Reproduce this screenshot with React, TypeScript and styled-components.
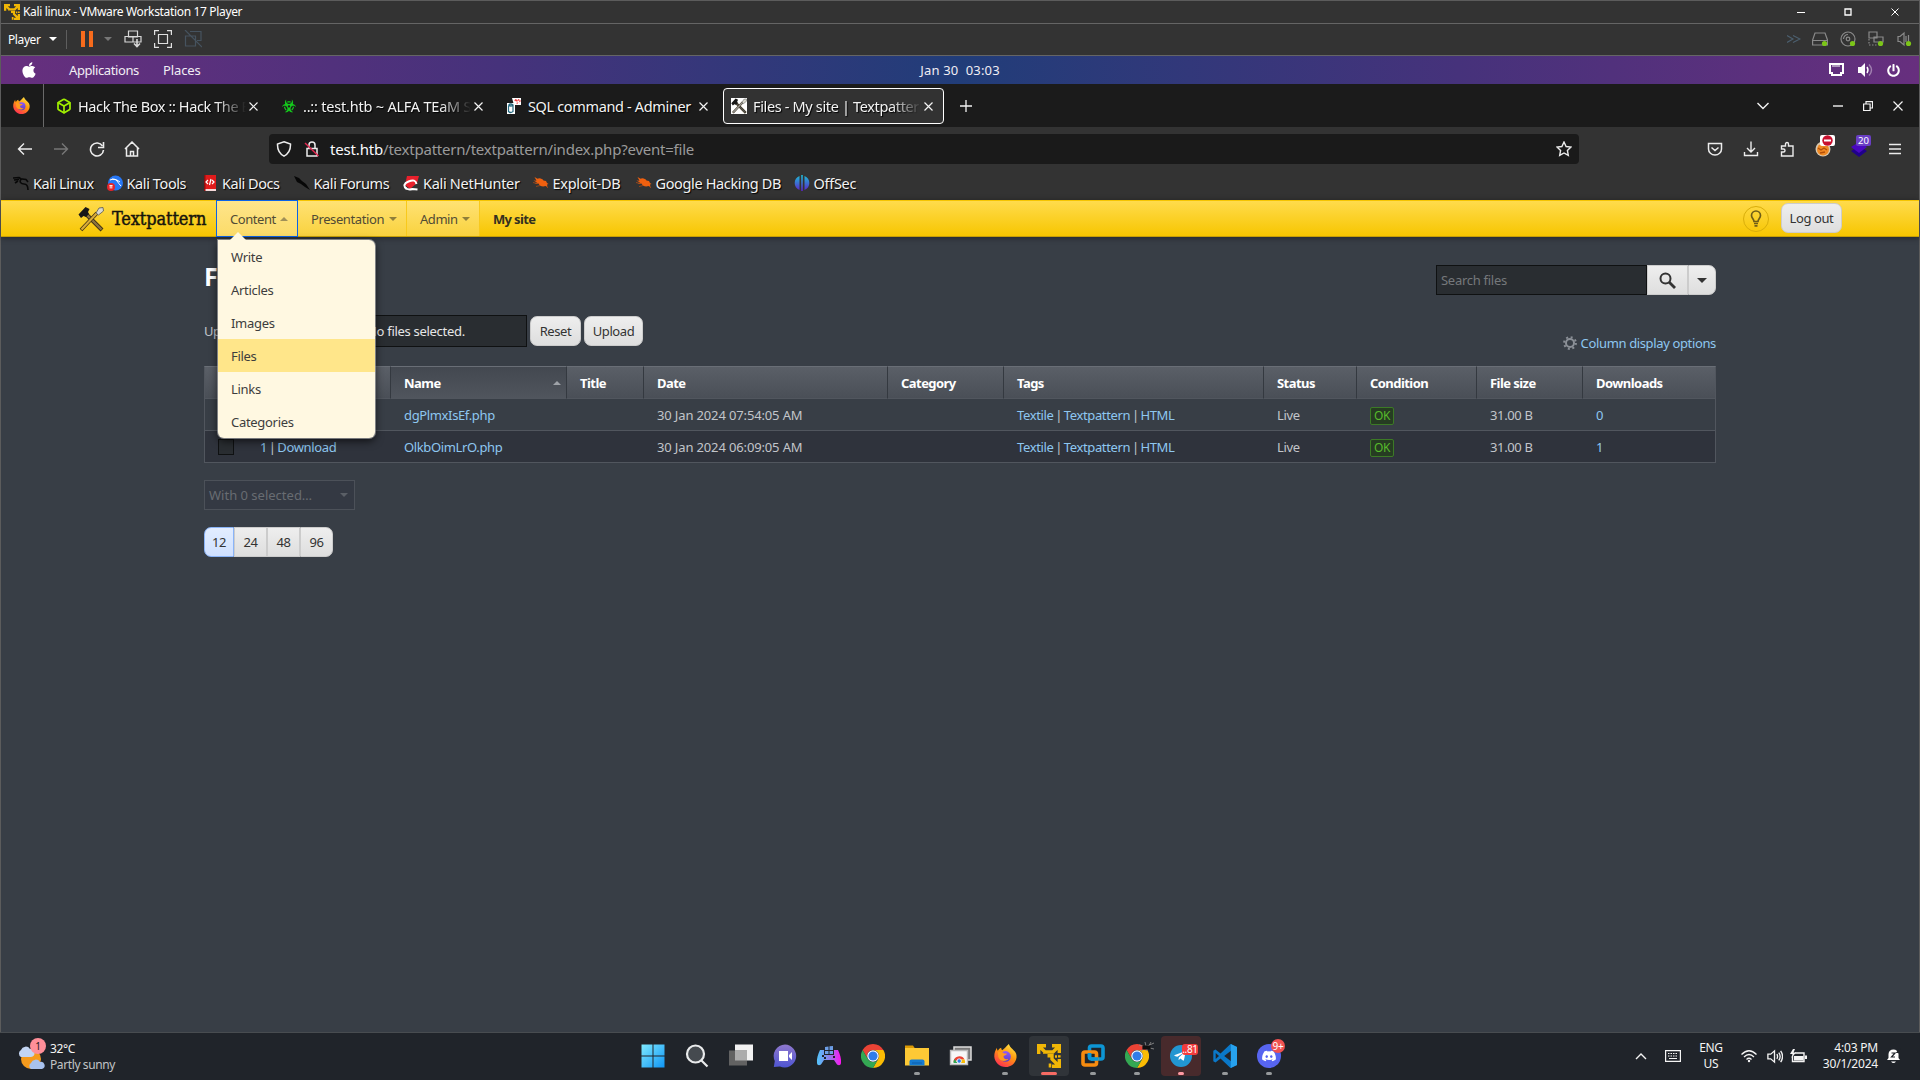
import React from 'react';
import styled, { createGlobalStyle } from 'styled-components';
import { FaApple, FaBiohazard, FaDiscord, FaTelegramPlane, FaPowerOff } from 'react-icons/fa';
import { Box } from 'lucide-react';

const Global = createGlobalStyle`
  * { box-sizing: border-box; }
  html, body { margin: 0; padding: 0; background: #16181b; }
  body { font-family: "Noto Sans", "Open Sans", sans-serif; font-size: 13px; overflow: hidden; }
  svg { display: block; flex: none; }
  button { font: inherit; padding: 0; margin: 0; }
`;

const Screen = styled.div`
  width: 1920px; height: 1080px; display: flex; flex-direction: column; overflow: hidden;
`;
const VmWindow = styled.div`
  height: 1032px; display: flex; flex-direction: column;
  border: 1px solid #5c5c5c; border-bottom: 0; background: #333;
`;
const Text = styled.span<{ $ls?: number; $size?: number; $color?: string; $w?: number; $bold?: boolean; $ml?: number }>`
  display: block; flex: none; white-space: pre;
  letter-spacing: ${p => p.$ls ?? -0.4}px;
  margin-left: ${p => p.$ml ?? 0}px;
  ${p => p.$size && `font-size: ${p.$size}px;`}
  ${p => p.$color && `color: ${p.$color};`}
  ${p => p.$w && `width: ${p.$w}px;`}
  ${p => p.$bold && 'font-weight: 700;'}
`;
const Slot = styled.span<{ $w: number; $ml?: number; $mr?: number }>`
  flex: none; width: ${p => p.$w}px; display: flex; align-items: center; justify-content: center; position: relative;
  margin: 0 ${p => p.$mr ?? 0}px 0 ${p => p.$ml ?? 0}px;
`;
const Grow = styled.div`flex: 1;`;

/* ---------- VMware chrome ---------- */
const TitleBar = styled.div`
  flex: none; height: 23px; display: flex; align-items: center; padding: 0 0 1px 3px; color: #fff;
  border-bottom: 1px solid #656565; gap: 3px;
`;
const WinButtons = styled.div`display: flex; align-items: center;`;
const PlayerBar = styled.div`
  flex: none; height: 32px; display: flex; align-items: center; padding: 0 1px 1px 7px; color: #fff;
  border-bottom: 1px solid #656565; background: #333;
`;
const Caret = styled.i<{ $up?: boolean; $color: string; $s?: number }>`
  flex: none; width: 0; height: 0; border: ${p => p.$s ?? 4}px solid transparent;
  ${p => p.$up
    ? `border-top: 0; border-bottom-color: ${p.$color};`
    : `border-bottom: 0; border-top-color: ${p.$color};`}
`;
const Divider = styled.i`width: 1px; height: 19px; background: #5e5e5e; flex: none;`;
const Gray = styled.span`color: #8a8a8a; display: block;`;

/* ---------- Guest top panel ---------- */
const Panel = styled.div`
  flex: none; height: 28px; display: grid; grid-template-columns: 1fr auto 1fr; align-items: center;
  color: #f1edf4; background: linear-gradient(90deg, #672f7e 0%, #46327b 26%, #213d79 50%, #46327b 76%, #672f7e 100%);
`;
const PanelSide = styled.div<{ $end?: boolean }>`
  display: flex; align-items: center; justify-content: ${p => (p.$end ? 'flex-end' : 'flex-start')};
  padding: ${p => (p.$end ? '0 12px 0 0' : '0 0 0 14px')};
`;

/* ---------- Browser ---------- */
const TabStrip = styled.div`
  flex: none; height: 43px; display: flex; align-items: center; background: #1b1b1b; color: #f3f3f3; padding-right: 6px;
`;
const Pinned = styled.div`
  width: 43px; height: 43px; border-right: 1px solid #6a6a6a; display: flex; align-items: center; padding-left: 12px; margin-right: 4px;
`;
const Tab = styled.div<{ $active?: boolean }>`
  flex: none; width: 221px; height: 36px; margin-right: 4px; display: flex; align-items: center; padding: 1px 8px 0 7px;
  border: 1px solid ${p => (p.$active ? '#fff' : 'transparent')}; border-radius: 4px;
  background: ${p => (p.$active ? '#323232' : 'transparent')};
`;
const TabLabel = styled.span<{ $fade: boolean; $ls: number }>`
  flex: 1; min-width: 0; margin-left: 6px; overflow: hidden; white-space: pre; font-size: 14.5px;
  letter-spacing: ${p => p.$ls}px; line-height: 24px; text-shadow: 1px 1px 1px #000;
  ${p => p.$fade && 'mask-image: linear-gradient(90deg, #000 82%, transparent 100%);'}
`;
const NavBar = styled.div`
  flex: none; height: 42px; display: flex; align-items: center; background: #333; padding: 1px 6px 0; color: #ececec;
`;
const UrlBox = styled.div`
  width: 1310px; height: 30px; margin-left: 120px; border-radius: 4px; background: #1a1a1a; display: flex; align-items: center;
  font-size: 15px;
`;
const Bookmarks = styled.div`
  flex: none; height: 31px; display: flex; align-items: center; background: #333; padding: 0 0 3px 12px; color: #f2f2f2;
`;
const Bookmark = styled.div<{ $w: number; $ls: number }>`
  flex: none; width: ${p => p.$w}px; display: flex; align-items: center; gap: 4px; white-space: pre; font-size: 14.5px;
  letter-spacing: ${p => p.$ls}px; text-shadow: 1px 1px 1px #000;
`;
const ExtBadge = styled.span<{ $bg: string; $color: string }>`
  position: absolute; left: 15px; top: -6px; width: 15px; height: 11px; border-radius: 2px; font-size: 9.5px; line-height: 11px;
  text-align: center; background: ${p => p.$bg}; color: ${p => p.$color}; display: flex; align-items: center; justify-content: center;
`;

/* ---------- Textpattern ---------- */
const SiteHeader = styled.header`
  flex: none; height: 37px; display: flex; align-items: center; padding: 0 77px;
  border-top: 1px solid #f5c400; border-bottom: 1px solid #c79f06;
  background: linear-gradient(#ffdb4c, #f7c600); box-shadow: 0 1px 6px rgba(0,0,0,.4); position: relative;
`;
const Brand = styled.div`
  flex: none; width: 138px; display: flex; align-items: center; gap: 8px; color: #17150c; white-space: nowrap;
  font: 400 18px "DejaVu Serif Condensed", "DejaVu Serif", "Liberation Serif", serif; letter-spacing: -.1px;
  -webkit-text-stroke: .45px #17150c;
`;
const MenuTab = styled.div<{ $w: number; $open?: boolean }>`
  flex: none; position: relative; width: ${p => p.$w}px; height: ${p => (p.$open ? 37 : 35)}px; display: flex; align-items: center;
  justify-content: space-between; padding: 0 9px 0 13px; color: #514b35;
  background: ${p => (p.$open ? 'linear-gradient(#fee58b, #fbdb68)' : 'linear-gradient(#ffe274, #f9d23e)')};
  border: ${p => (p.$open ? '1px solid #0a63e8' : '0')}; border-right: ${p => (p.$open ? '1px solid #0a63e8' : '1px solid #f8c91c')};
`;
const DropMenu = styled.nav`
  position: absolute; z-index: 5; left: 1px; top: 39px; width: 157px; height: 198px; background: #fff8e1; color: #3d3d3d;
  border-radius: 0 6px 6px 6px; box-shadow: 0 0 0 1px rgba(200,200,200,.55), 0 3px 8px rgba(0,0,0,.7); display: flex; flex-direction: column;
  &::before { content: ''; position: absolute; left: 12px; top: -8px; border: 8px solid transparent; border-top: 0; border-bottom-color: #fff8e1; }
`;
const MenuItem = styled.a<{ $on?: boolean }>`
  flex: none; height: 33px; display: flex; align-items: center; padding: 0 0 0 13px; background: ${p => (p.$on ? '#ffe68a' : 'transparent')};
`;
const Bulb = styled.span`
  width: 26px; height: 26px; border: 1px solid #d9ae0a; border-radius: 50%; display: flex; align-items: center; justify-content: center; margin-right: 12px;
`;
const Button = styled.button<{ $w: number; $radius?: string; $blue?: boolean; $up?: boolean }>`
  flex: none; width: ${p => p.$w}px; height: 30px; border-radius: ${p => p.$radius ?? '7px'}; color: #333; letter-spacing: -0.4px;
  display: flex; align-items: center; justify-content: center; margin-bottom: ${p => (p.$up ? 2 : 0)}px;
  border: 1px solid ${p => (p.$blue ? '#8ab4f8' : '#ccc')};
  background: ${p => (p.$blue ? 'linear-gradient(#e2edff, #cfe0ff)' : 'linear-gradient(#eee, #dedede)')};
`;
const Page = styled.main`
  flex: 1; background: #383e46; padding: 28px 203px 0; color: #c2c5ca; display: flex; flex-direction: column; align-items: stretch;
`;
const Row = styled.div<{ $h: number; $mt?: number; $align?: string; $gap?: number }>`
  display: flex; align-items: ${p => p.$align ?? 'center'}; height: ${p => p.$h}px; margin-top: ${p => p.$mt ?? 0}px; flex: none;
  gap: ${p => p.$gap ?? 0}px;
`;
const Heading = styled.h1`margin: 0; padding-bottom: 8px; font-size: 25px; line-height: 24px; color: #fff; letter-spacing: -.5px;`;
const FileInput = styled.div`
  width: 271px; height: 32px; background: #292d31; border: 1px solid #0f1112; color: #e6e6e6; display: flex; align-items: center;
  padding-left: 110px; letter-spacing: -.3px; white-space: pre;
`;
const SearchInput = styled.div`
  width: 211px; height: 30px; background: #292d31; border: 1px solid #0f1112; color: #75787b; display: flex; align-items: center;
  padding-left: 4px; letter-spacing: -.28px;
`;
const Link = styled.a`color: #8ec7f0;`;
const Table = styled.table`
  flex: none; width: 1512px; margin-top: 14px; table-layout: fixed; border-collapse: separate; border-spacing: 0; letter-spacing: -.36px; white-space: pre;
  td, th { padding: 1px 0 0 13px; text-align: left; height: 32px; border-bottom: 1px solid #51565e; }
  td:first-child, th:first-child { border-left: 1px solid #51565e; }
  td:last-child { border-right: 1px solid #51565e; }
`;
const Th = styled.th<{ $sorted?: boolean }>`
  color: #fff; letter-spacing: -.55px; border-top: 1px solid #696e76; border-right: 1px solid #343940;
  &&& { height: 33px; }
  background: ${p => (p.$sorted ? 'linear-gradient(#434850, #50555d)' : 'linear-gradient(#5a5f67, #4a4f57)')};
  &:last-child { border-right-color: #51565e; }
`;
const ThInner = styled.div`display: flex; align-items: center; justify-content: space-between; padding-right: 5px;`;
const Tr = styled.tr<{ $dark?: boolean }>`background: ${p => (p.$dark ? '#2f333c' : 'transparent')};`;
const DateText = styled.span`letter-spacing: -.14px;`;
const Sep = styled.span`word-spacing: -1.3px;`;
const IdCell = styled.div`display: flex; align-items: center;`;
const Check = styled.i`width: 16px; height: 16px; background: #292d31; border: 1px solid #0f1112; margin-right: 26px;`;
const Ok = styled.span`
  display: inline-block; vertical-align: middle; width: 24px; height: 18px; line-height: 16px; border: 1px solid #3c7a26; border-radius: 2px; background: #263c22;
  color: #57ba2c; font-size: 12px; text-align: center;
`;
const Select = styled.div`
  width: 151px; height: 30px; border: 1px solid #4c5159; background: #343943; color: #686c72; display: flex; align-items: center;
  justify-content: space-between; padding: 0 6px 0 4px; letter-spacing: 0;
`;

/* ---------- Taskbar ---------- */
const Taskbar = styled.footer`
  flex: none; height: 48px; background: #20242a; border-top: 1px solid #484c50; display: grid; grid-template-columns: 631px 660px 1fr; color: #f4f4f4;
  font-size: 12px; letter-spacing: -.3px;
`;
const Zone = styled.div<{ $pb?: number }>`display: flex; align-items: center; position: relative; padding-bottom: ${p => p.$pb ?? 0}px;`;
const AppIcon = styled.div<{ $bg?: string }>`
  width: 40px; height: 40px; margin: 0 2px; border-radius: 4px; display: flex; align-items: center; justify-content: center; position: relative;
  background: ${p => p.$bg ?? 'transparent'};
`;
const Dot = styled.i<{ $w: number; $c: string }>`
  position: absolute; bottom: 1px; left: 50%; width: ${p => p.$w}px; height: 3px; margin-left: ${p => -p.$w / 2}px; border-radius: 2px; background: ${p => p.$c};
`;
const Overlay = styled.span`position: absolute; left: 22px; top: 6px;`;
const Badge = styled.b<{ $round?: boolean; $bg: string; $x: number; $y: number; $w: number; $h: number; $c?: string }>`
  position: absolute; left: ${p => p.$x}px; top: ${p => p.$y}px; width: ${p => p.$w}px; height: ${p => p.$h}px; line-height: ${p => p.$h}px;
  border-radius: ${p => (p.$round ? '50%' : '3px')}; background: ${p => p.$bg}; color: ${p => p.$c ?? '#fff'}; font-weight: 400; font-size: 10px; text-align: center;
`;
const Stack = styled.div<{ $align?: string; $w?: number; $ls?: number }>`
  flex: none; display: flex; flex-direction: column; line-height: 16px; text-align: ${p => p.$align ?? 'left'}; ${p => p.$w && `width: ${p.$w}px;`}
  letter-spacing: ${p => p.$ls ?? -.3}px;
`;
const Muted = styled.span`color: #c2c4c6;`;

/* ---------- Icons ---------- */
const S = ({ w = 16, h, vb, children, ...r }: any) => (
  <svg width={w} height={h ?? w} viewBox={vb ?? `0 0 ${w} ${h ?? w}`} fill="none" stroke="currentColor" strokeWidth={1.4} {...r}>{children}</svg>
);
const VmLogo = ({ s }: { s: number }) => (
  <svg width={s} height={s} viewBox="0 0 24 24" fill="none" stroke="#f0b606" strokeWidth="3.400">
    <path d="M1.700 10V1.700H9M15 1.700h7.300V9M2 2l6.500 6.500M22 2l-6 6H6" />
    <path d="M22.300 15v7.300H15M21.500 21.500L15 15v-3.200h-4.500" />
    <path d="M22.300 11.200v2.300M13 19.500v4M18 12.500h2" strokeWidth="2.600" />
  </svg>
);
const Firefox = ({ s }: { s: number }) => (
  <svg width={s} height={s} viewBox="0 0 24 24">
    <defs>
      <linearGradient id="fx" x1=".8" y1="0" x2=".25" y2="1"><stop offset="0" stopColor="#ffe84a" /><stop offset=".45" stopColor="#ff980e" /><stop offset="1" stopColor="#ff2a55" /></linearGradient>
      <linearGradient id="fp" x1="0" y1="0" x2="0" y2="1"><stop offset="0" stopColor="#9059ff" /><stop offset="1" stopColor="#5b3ec2" /></linearGradient>
    </defs>
    <path fill="url(#fx)" d="M3 4c0 1.500.5 2.500 1 3 1-1.500 2-2.500 3.500-3 0 1 .5 2 1 2.500C11 5 12 3 15.500 0c.5 2 2 3.500 4 5.500C22 8 24 10 23.500 14 22.800 19.800 18 24 12 24S.5 19 .3 13C.2 9.500 1.500 6.500 3 4z" />
    <circle cx="12" cy="13" r="5.600" fill="url(#fp)" />
    <path fill="#ff9a1f" d="M4 8.500c3-1 5 0 6.500 1.500h3c-.3 1.500-2 2-3.500 2.500-.5 2.500 2 4 5 3-1.500 3-9 3.500-10.500-2z" />
  </svg>
);
const Chrome = ({ s }: { s: number }) => (
  <svg width={s} height={s} viewBox="0 0 24 24">
    <path fill="#ea4335" d="M12 0a12 12 0 0 1 10.400 6H12a6 6 0 0 0-5.200 9L1.600 6A12 12 0 0 1 12 0z" />
    <path fill="#fbbc04" d="M22.400 6A12 12 0 0 1 12 24l5.200-9A6 6 0 0 0 12 6z" />
    <path fill="#34a853" d="M1.600 6l5.200 9A6 6 0 0 0 17.200 15L12 24A12 12 0 0 1 1.600 6z" />
    <circle cx="12" cy="12" r="5.800" fill="#fff" /><circle cx="12" cy="12" r="4.600" fill="#2f7de9" />
  </svg>
);
const Hammer = ({ s, mono }: { s: number; mono?: boolean }) => (
  <svg width={s} height={s} viewBox="0 0 26 26">
    {mono && <path fill="#fff" d="M0 0h26v26H0z" />}
    <path d="M8 8l16 16" stroke="#3c2f12" strokeWidth="4" /><path d="M8 8l15.500 15.500" stroke={mono ? '#555' : '#8d7440'} strokeWidth="2.400" />
    <path d="M3 24L19 7" stroke="#3c2f12" strokeWidth="3.600" /><path d="M3.500 23.500L19 7" stroke={mono ? '#999' : '#d8ac3a'} strokeWidth="2.200" />
    <path d="M18 7l3-5 4-.5.500 3.500-5 4z" fill="#d9d9cf" stroke="#555" strokeWidth=".8" />
    <path d="M.5 8.500l7-7.500 4 2-1.500 3 1 2-3 3-2.500-1-2.500 2z" fill="#181818" />
  </svg>
);
const X = ({ s = 9, w = 1.2 }: { s?: number; w?: number }) => <S w={s} strokeWidth={w}><path d={`M.5.5l${s - 1} ${s - 1}M${s - .5}.5l-${s - 1} ${s - 1}`} /></S>;
const Bug = () => <S stroke="none"><path fill="#f0600f" d="M1.500 2l3 1.800c2-1.300 5 0 6 1.700l2.500.500 1 2 1.500 1-1.500.5.500 2.500-2-1c-3 1-6 0-7-2.500L1.500 9 4 7.500.5 5.500l3 .2z" /><path d="M0 7.500l5 1M3 11.500l4-1M13 11l2 2" stroke="#a84a16" strokeWidth=".8" /></S>;
const Dragon = () => (
  <S stroke="#080808" strokeWidth={1.600}><path d="M0 3l6-.5 3 2M1 5l5-.5M8 4c-2 3 0 5 3 5s4 2 4 6M9 4l4 .5 2 2.500M2 8l3-2" /></S>
);
const Speaker = () => (
  <S w={17} vb="0 0 18 18"><path d="M2 6.500h3l4-3.500v12l-4-3.500H2z" /><path d="M11.500 6.500q1.500 2.500 0 5M13.500 5q3 4 0 8M15.500 3q4 6 0 12" /></S>
);

const bookmarks: [string, number, number, React.ReactNode][] = [
  ['Kali Linux', 93.5, -.47, <Dragon />],
  ['Kali Tools', 95.5, -.4, <S stroke="none"><circle cx="8.500" cy="8" r="7.500" fill="#2777f5" /><path d="M3 5q5-2 7 1t4 5M5 4q5 0 8 3" stroke="#fff" strokeWidth="1" /><circle cx="4" cy="12" r="4" fill="#e5252a" /><path d="M2.500 10.500h3M3.200 10.500v3M4.800 10.500v3" stroke="#fff" strokeWidth=".9" /></S>],
  ['Kali Docs', 91.5, -.45, <S stroke="none"><path fill="#e01b1b" d="M2 0h12v14H2z" /><path fill="#f6d9d9" d="M2 14h12v2H2z" /><path fill="#8d1010" d="M2 0h1.500v16H2z" /><path d="M6 5l-2 2 2 2M10 5l2 2-2 2M9 4L7.500 10" stroke="#fff" strokeWidth="1.200" /></S>],
  ['Kali Forums', 109.5, -.4, <S stroke="none"><path fill="#070707" d="M0 1l5 2 3 3 4 3 4 6-5-3-4-3-4-2z" /></S>],
  ['Kali NetHunter', 129.5, -.3, <S stroke="none"><path fill="#e8202c" d="M4 1h12l-2 7-7 6-5-4z" /><path d="M3.500 14q-5-4.500 2-7.500t8 2.500M2.500 12.500q2 3 7 1.500l5 .5" stroke="#fff" strokeWidth="2" /></S>],
  ['Exploit-DB', 103, -.3, <Bug />],
  ['Google Hacking DB', 158, -.36, <Bug />],
  ['OffSec', 80, -.3, <S stroke="none"><defs><linearGradient id="os" gradientUnits="userSpaceOnUse" x1="0" y1="0" x2="0" y2="16"><stop stopColor="#1cc0d8" /><stop offset="1" stopColor="#5b21c9" /></linearGradient></defs><path fill="url(#os)" d="M5.500 1v14A7.500 7.500 0 0 1 5.500 1zM7.200 0h1.600v16H7.200zM10.500 1a7.500 7.500 0 0 1 0 14z" /></S>],
];
const tabs: [string, number, boolean, React.ReactNode][] = [
  ['Hack The Box :: Hack The Box', -.4, true, <Box size={16} color="#a0ee00" strokeWidth={2.6} />],
  ['..:: test.htb ~ ALFA TEaM Shell', -.21, true, <FaBiohazard size={14} color="#14c91c" />],
  ['SQL command - Adminer', -.35, false, <S stroke="none"><path fill="#fff" d="M1 5h8v11H1zM6 0h9v7H8z" /><path d="M2.500 7.500v6q2 2 4.500 0v-6M2.500 7q2.200-2 4.500 0-2.200 2-4.500 0" stroke="#256a80" strokeWidth="1.200" /><path d="M9 3q1-3 2 0t-1 2.500M12 2.500q1.500-2 2 .5l-1 2" stroke="#e22" strokeWidth="1.200" strokeDasharray="1.500 1" /></S>],
  ['Files - My site | Textpattern CMS', -.35, true, <Hammer s={16} mono />],
];
const columns = [187, 176, 77, 244, 116, 260, 93, 120, 106, 133];
const heads = ['', 'Name', 'Title', 'Date', 'Category', 'Tags', 'Status', 'Condition', 'File size', 'Downloads'];
const files = [
  { id: 2, name: 'dgPlmxIsEf.php', date: '30 Jan 2024 07:54:05 AM', n: 0 },
  { id: 1, name: 'OlkbOimLrO.php', date: '30 Jan 2024 06:09:05 AM', n: 1 },
];
const folder = <S w={24} stroke="none"><path fill="#dc9a05" d="M0 1.500h8l2 3h-10z" /><path fill="#fdc935" d="M0 4h24v17.500H0z" /><path fill="#157bd1" d="M4.500 21.500v-4q0-2 2-2h11q2 0 2 2v4z" /><path fill="#0e5fa8" d="M7 18.500h10v1H7z" /></S>;
const apps: { icon: React.ReactNode; dot?: 'g' | 'r' | 'p'; bg?: string; extra?: React.ReactNode }[] = [
  { icon: <S w={24} stroke="none"><defs><linearGradient id="wn" x1="0" y1="0" x2="1" y2="1"><stop stopColor="#7feaff" /><stop offset="1" stopColor="#0f95f5" /></linearGradient></defs><path fill="url(#wn)" d="M.5.5h11v11h-11zM12.500.5h11v11h-11zM.5 12.500h11v11h-11zM12.500 12.500h11v11h-11z" /></S> },
  { icon: <S w={24} stroke="#e9ebec" strokeWidth={2.2}><circle cx="10.500" cy="10" r="8.500" fill="#454a4f" /><path d="M16.500 16.500l6 6" /></S> },
  { icon: <S w={24} stroke="none"><path fill="#f2f2f2" d="M6 .5h18v16H6z" /><path fill="#626262" d="M0 6.500h18v15H0z" /><path fill="#acacac" d="M6 6.500h12v10H6z" /></S> },
  { icon: <S w={24} stroke="none"><defs><linearGradient id="tm" x1="0" y1="0" x2="0" y2="1"><stop stopColor="#8f78cd" /><stop offset="1" stopColor="#4e55d2" /></linearGradient></defs><path fill="url(#tm)" d="M12 .5a11.500 11.500 0 1 1-5 22L.8 23 1.800 17A11.500 11.500 0 0 1 12 .5z" /><path fill="#fff" d="M6 7h9v10H6zM16 11l3-3v8l-3-3z" /></S> },
  { icon: <S w={26} h={24} stroke="none"><defs><linearGradient id="gp" x1="0" y1="0" x2="1" y2="0"><stop stopColor="#52c6fb" /><stop offset=".5" stopColor="#8c7fea" /><stop offset="1" stopColor="#ff12f0" /></linearGradient></defs><path fill="#6d9ee6" d="M9 3l3.500-.5V6H9zM13.500 2.300L17 2v4h-3.500zM9 7h3.500v3H9zM13.500 7H17v3h-3.500z" /><path fill="url(#gp)" d="M4 6h4v5h10V6h4c2 4 3.500 9 3 13-.3 3-3.500 3-5 0l-2-3H8l-2 3c-1.500 3-4.700 3-5 0C.5 15 2 10 4 6z" /><path fill="#20242a" d="M6 11h2v2h2v2H8v-2H6zM17 12h2v2h-2z" /></S> },
  { icon: <Chrome s={24} /> },
  { icon: folder, dot: 'g' },
  { icon: <S w={24} stroke="none"><path fill="#777" stroke="#ddd" strokeWidth="1.500" d="M5 3h17v13H5z" /><path fill="#f7f7f7" stroke="#bbb" d="M1.500 6.500h17v14h-17z" /><path fill="#ea4335" d="M4.500 18a5.800 5.800 0 0 1 11-2.500H10z" /><path fill="#34a853" d="M4.500 19a6 6 0 0 1 1-4l3 4z" /><path fill="#fbbc04" d="M12 15.500h3.500q1 2 .5 3.500h-4z" /><circle cx="10.200" cy="17" r="2.200" fill="#2f7de9" stroke="#fff" strokeWidth=".8" /></S> },
  { icon: <Firefox s={23} />, dot: 'g' },
  { icon: <VmLogo s={24} />, dot: 'r', bg: '#303439' },
  { icon: <S w={24} strokeWidth={3.6}><rect x="8.500" y="2" width="13.500" height="13" rx="2" stroke="#0d96d5" /><rect x="2" y="8" width="13.500" height="13" rx="2" stroke="#f68b0f" /><path d="M8.500 13.200V9M10 15h7" stroke="#0d96d5" /></S>, dot: 'g' },
  { icon: <Chrome s={24} />, dot: 'g', extra: <Overlay><S w={16} h={10} stroke="#111" strokeWidth={1.2}><path d="M0 3l6 2 9-4M2 9l5-4 8 2M6 0l2 8M12 0L7 9" stroke="#8a8a8a" strokeWidth=".9" /><path d="M4 4h7v3H4z" fill="#111" /></S></Overlay> },
  { icon: <S w={22} stroke="none"><circle cx="11" cy="11" r="11" fill="#2296d1" /><g transform="translate(3.500 4.500)"><FaTelegramPlane size={13} color="#fff" /></g></S>, dot: 'p', bg: '#482a2c', extra: <Badge $bg="#f23c3c" $x={21} $y={8} $w={16} $h={11}>..81</Badge> },
  { icon: <S w={24} stroke="none"><path fill="#0a78c8" d="M17.500 0L24 3v18l-6.500 3L7.500 14.500 2.500 18.500.3 17.300V6.700l2.200-1.200 5 4z" /><path fill="#20242a" d="M2.700 9v6L6 12zM18 6.700L11.200 12l6.800 5.300z" /><path fill="#27a2ee" d="M17.800 0L24 3v18l-6.200 3z" /></S>, dot: 'g' },
  { icon: <S w={24} stroke="none"><circle cx="12" cy="12" r="12" fill="#5765f0" /><g transform="translate(4.500 4.500)"><FaDiscord size={15} color="#fff" /></g></S>, dot: 'g', extra: <Badge $round $bg="#f05252" $x={22} $y={3} $w={14} $h={14}>9+</Badge> },
];
const dots = { g: [6, '#96999b'], r: [16, '#f56b64'], p: [6, '#ff9aa2'] } as const;

export default function App() {
  return (
    <Screen>
      <Global />
      <VmWindow>
        <TitleBar>
          <VmLogo s={16} />
          <Text $size={12} $ls={-.34}>Kali linux - VMware Workstation 17 Player</Text>
          <Grow />
          <WinButtons>
            <Slot $w={47}><S w={8} strokeWidth={1}><path d="M0 4.500h8" /></S></Slot>
            <Slot $w={47}><S w={8} strokeWidth={1.3}><path d="M1 1h6v6H1z" /></S></Slot>
            <Slot $w={48}><X s={8} w={1} /></Slot>
          </WinButtons>
        </TitleBar>
        <PlayerBar>
          <Text $size={12} $ls={-.4} $w={41}>Player</Text>
          <Caret $color="#fff" />
          <Slot $w={18}><Divider /></Slot>
          <Slot $w={24}><S w={12} h={16} stroke="none"><path fill="#f76b1c" d="M0 0h4v16H0zM8 0h4v16H8z" /></S></Slot>
          <Slot $w={18}><Caret $color="#777" /></Slot>
          <Slot $w={32}><S w={18} strokeWidth={1.2} stroke="#d8d8d8"><path d="M4.500 1h9v6h-9zM1 6.500h16v5.500H1zM9 7v5" /><path d="M13 9v7.500M10 13.500l3 3 3-3" strokeWidth="1.600" /></S></Slot>
          <Slot $w={28}><S w={18} strokeWidth={1.2} stroke="#e0e0e0"><path d="M.6 5V.6H5M13 .6h4.400V5M17.400 13v4.400H13M5 17.400H.6V13M4.500 4.500h9v9h-9z" /></S></Slot>
          <Slot $w={32}><S w={18} strokeWidth={1.2} stroke="#46535f"><path d="M6 1.500h11v9h-4M1.500 6h10v10h-10zM1 0l17 17" /></S></Slot>
          <Grow />
          <Slot $w={25}><S w={14} h={8} strokeWidth={1.1} stroke="#4c6070"><path d="M0 .5l6 3.500-6 3.500M6 .5l7 3.500-7 3.500" /></S></Slot>
          {[0, 1, 2, 3].map(i => (
            <Slot $w={28} key={i}>
              <Gray>
                <S w={16} strokeWidth={1.2}>
                  {i === 0 && <path d="M3 2h10l2.500 7v5H.6V9zM.6 9.500h14.500" />}
                  {i === 1 && <><circle cx="8" cy="8" r="7" /><circle cx="8" cy="8" r="1.800" /><path d="M3.500 8A4.500 4.500 0 0 1 8 3.500" /></>}
                  {i === 2 && <><path d="M1 1h8v6H1zM6 6h9v5H6z" /><path d="M1 8v6h9" strokeDasharray="1.500 1.500" /></>}
                  {i === 3 && <><path d="M2 5.500h2l4-3.500v12l-4-3.500H2z" /><path d="M10 5v6M12.500 4v6" /></>}
                  <circle cx="12.500" cy="12.500" r="2.600" fill="#7cc518" stroke="none" />
                </S>
              </Gray>
            </Slot>
          ))}
        </PlayerBar>
        <Panel>
          <PanelSide>
            <Slot $w={28} $mr={26}><FaApple size={18} color="#fff" /></Slot>
            <Text $ls={-.4} $w={94}>Applications</Text>
            <Text $ls={-.1}>Places</Text>
          </PanelSide>
          <Text $ls={.2}>Jan 30  03:03</Text>
          <PanelSide $end>
            <Slot $w={30}><S w={15} h={14} stroke="#fff" strokeWidth={2}><path d="M1 1h13v9h-2v2H3v-2H1z" /><path d="M3.500 3h8" strokeDasharray="1 1" /></S></Slot>
            <Slot $w={28}><S w={15} h={14} stroke="#fff"><path fill="#fff" stroke="none" d="M0 4h3l4-4v14L3 10H0z" /><path d="M9 4q2 3 0 6" /><path d="M11 1.500q5 5.500 0 11" opacity=".4" /></S></Slot>
            <Slot $w={28}><FaPowerOff size={13} color="#fff" /></Slot>
          </PanelSide>
        </Panel>
        <TabStrip>
          <Pinned><Firefox s={17} /></Pinned>
          {tabs.map(([t, ls, fade, icon], i) => (
            <Tab key={t} $active={i === 3}>
              <Slot $w={16}>{icon}</Slot>
              <TabLabel $fade={fade} $ls={ls}>{t}</TabLabel>
              <Slot $w={14}><X s={9} w={1.2} /></Slot>
            </Tab>
          ))}
          <Slot $w={35}><S w={12} strokeWidth={1.3}><path d="M6 0v12M0 6h12" /></S></Slot>
          <Grow />
          <Slot $w={44} $mr={38}><S w={12} h={8} strokeWidth={1.4}><path d="M.5 1L6 6.500 11.500 1" /></S></Slot>
          <Slot $w={30}><S w={10} h={2}><path d="M0 1h10" /></S></Slot>
          <Slot $w={30}><S w={10} strokeWidth={1.2}><path d="M.6 3h6.500v6.500H.6zM3 3V.6h6.500V7H7" /></S></Slot>
          <Slot $w={30}><X s={10} w={1.2} /></Slot>
        </TabStrip>
        <NavBar>
          <Slot $w={36}><S><path d="M15 8H1.500M7 2.500L1.500 8 7 13.500" /></S></Slot>
          <Slot $w={36}><S stroke="#777"><path d="M1 8h13.500M9 2.500L14.500 8 9 13.500" /></S></Slot>
          <Slot $w={36}><S strokeWidth={1.6}><path d="M13.500 5A6.500 6.500 0 1 0 14.500 9" /><path d="M14.500 1v5.500H9" /></S></Slot>
          <Slot $w={34}><S strokeWidth={1.5}><path d="M1 8l7-7 7 7M2.500 7v8h11V7M6.500 15v-4.500h3V15" /></S></Slot>
          <UrlBox>
            <Slot $w={29}><S strokeWidth={1.5}><path d="M8 .8l6.500 2.300c.2 5.500-1.500 9.500-6.500 12.100C3 12.600 1.300 8.600 1.500 3.100z" /></S></Slot>
            <Slot $w={28}><S strokeWidth={1.5}><path d="M3 7.500h10v7.500H3zM5 7.500V4a3 3 0 0 1 6 0v3.500" /><path d="M1 2l13.500 13" stroke="#e22850" /></S></Slot>
            <Text $ls={-.17} $color="#fbfbfe" $ml={4}>test.htb</Text>
            <Text $ls={-.22} $color="#9a9a9a">/textpattern/textpattern/index.php?event=file</Text>
            <Grow />
            <Slot $w={31}><S strokeWidth={1.4}><path d="M8 1l2.100 4.500 4.900.6-3.600 3.400.9 4.900L8 12l-4.300 2.400.9-4.900L1 6.100l4.900-.6z" /></S></Slot>
          </UrlBox>
          <Grow />
          <Slot $w={36}><S strokeWidth={1.5}><path d="M1.500 2.500h13V8c0 3.500-3 6-6.500 6S1.500 11.500 1.500 8zM4.500 6.500L8 9.500l3.500-3" /></S></Slot>
          <Slot $w={36}><S><path d="M8 .5v10M4 7l4 4 4-4M1.500 11v3.500h13V11" /></S></Slot>
          <Slot $w={36}><S><path d="M2.500 5h4V3a1.500 1.500 0 0 1 3 0v2h4.500v10H2.500v-4h2a1.500 1.500 0 0 0 0-3h-2z" /></S></Slot>
          <Slot $w={36}><S stroke="none"><circle cx="8" cy="8" r="7.500" fill="#d8c8b0" /><circle cx="8" cy="8.500" r="6" fill="#f08a24" /><path d="M3 7l3 2 3-2 3 2M5 12l5-1" stroke="#b44f08" /></S>
            <ExtBadge $bg="#fff" $color="#c8102e"><S w={11} stroke="none"><circle cx="5.500" cy="5.500" r="5.200" fill="#c8102e" /><path fill="#fff" d="M2 4.500h7v2H2z" /></S></ExtBadge></Slot>
          <Slot $w={36}><S stroke="none"><path fill="#20008c" d="M8 5l8 5-8 6-8-6z" /><path fill="#4a08c0" d="M8 1l8 5-8 6-8-6z" /></S><ExtBadge $bg="#6a3fc4" $color="#fff">20</ExtBadge></Slot>
          <Slot $w={36}><S w={12} strokeWidth={1.3}><path d="M0 1.500h12M0 6h12M0 10.500h12" /></S></Slot>
        </NavBar>
        <Bookmarks>
          {bookmarks.map(([t, w, ls, icon]) => <Bookmark key={t} $w={w} $ls={ls}>{icon}{t}</Bookmark>)}
        </Bookmarks>
        <SiteHeader>
          <Brand><Hammer s={26} />Textpattern</Brand>
          <MenuTab $w={82} $open>
            <Text $ls={-.45}>Content</Text><Caret $up $color="#a09058" />
            <DropMenu>
              {['Write', 'Articles', 'Images', 'Files', 'Links', 'Categories'].map(m => (
                <MenuItem key={m} $on={m === 'Files'}><Text $ls={-.3}>{m}</Text></MenuItem>
              ))}
            </DropMenu>
          </MenuTab>
          <MenuTab $w={109}><Text $ls={-.4}>Presentation</Text><Caret $color="#8f7f3a" /></MenuTab>
          <MenuTab $w={73}><Text $ls={-.45}>Admin</Text><Caret $color="#8f7f3a" /></MenuTab>
          <Text $bold $ls={-.65} $color="#33301f" $ml={13}>My site</Text>
          <Grow />
          <Bulb><S w={12} h={18} stroke="#6f5e18" strokeWidth={1.7}><path d="M4 11.500C4 9.500 1.500 8 1.500 5.500a4.500 4.500 0 0 1 9 0C10.500 8 8 9.500 8 11.500z" /><path d="M4 13.500h4M4.500 15.800h3" /></S></Bulb>
          <Button $w={61} $up>Log out</Button>
        </SiteHeader>
        <Page>
          <Row $h={30}>
            <Heading>Files</Heading><Grow />
            <SearchInput>Search files</SearchInput>
            <Button $w={41} $radius="0"><S w={17} stroke="#333"><circle cx="6.500" cy="6.500" r="5" strokeWidth="2" /><path d="M10 10l6 6" strokeWidth="2.800" /></S></Button>
            <Button $w={28} $radius="0 7px 7px 0"><Caret $color="#333" $s={5} /></Button>
          </Row>
          <Row $h={37} $mt={20} $align="flex-start">
            <Row $h={32} $gap={3}>
              <Text $w={49}>Upload</Text>
              <FileInput>No files selected.</FileInput>
              <Button $w={51}>Reset</Button><Button $w={59}>Upload</Button>
            </Row>
            <Grow />
            <Row $h={20} $mt={18} $gap={4}>
              <S w={14} stroke="#8b9097" strokeWidth={2}><circle cx="7" cy="7" r="4" /><circle cx="7" cy="7" r="5.900" strokeDasharray="2 2.630" strokeWidth="2" /></S>
              <Link><Text $ls={-.36}>Column display options</Text></Link>
            </Row>
          </Row>
          <Table>
            <colgroup>{columns.map((w, i) => <col key={i} width={w} />)}</colgroup>
            <thead><tr>{heads.map((h, i) => (
              <Th key={i} $sorted={i === 1}><ThInner>{h}{i === 1 && <Caret $up $color="#9ea2a8" />}</ThInner></Th>
            ))}</tr></thead>
            <tbody>{files.map((f, i) => (
              <Tr key={f.id} $dark={i === 1}>
                <td><IdCell><Check /><Link>{f.id}</Link><Sep> | </Sep><Link>Download</Link></IdCell></td>
                <td><Link>{f.name}</Link></td><td /><td><DateText>{f.date}</DateText></td><td />
                <td><Link>Textile</Link><Sep> | </Sep><Link>Textpattern</Link><Sep> | </Sep><Link>HTML</Link></td>
                <td>Live</td><td><Ok>OK</Ok></td><td>31.00 B</td><td><Link>{f.n}</Link></td>
              </Tr>
            ))}</tbody>
          </Table>
          <Row $h={30} $mt={17}><Select>With 0 selected…<Caret $color="#5a5f66" /></Select></Row>
          <Row $h={30} $mt={17}>
            <Button $w={30} $radius="7px 0 0 7px" $blue>12</Button>
            <Button $w={33} $radius="0">24</Button><Button $w={33} $radius="0">48</Button>
            <Button $w={33} $radius="0 7px 7px 0">96</Button>
          </Row>
        </Page>
      </VmWindow>
      <Taskbar>
        <Zone>
          <Slot $w={28} $ml={18} $mr={4}><S w={28} stroke="none"><circle cx="13" cy="16" r="10" fill="#f59a1c" /><path fill="#c3d5f3" d="M3 14a4 4 0 0 1 0-7 5 5 0 0 1 9-1 4 4 0 0 1 1 8z" /><path fill="#a8c2ee" d="M13 26a3.500 3.500 0 0 1 0-6 5 5 0 0 1 9-1 3.600 3.600 0 0 1 2 7z" /></S></Slot>
          <Badge $round $bg="#ff8f99" $c="#1a1a1a" $x={30} $y={5} $w={16} $h={16}>1</Badge>
          <Stack $ls={-.4}><span>32°C</span><Muted>Partly sunny</Muted></Stack>
        </Zone>
        <Zone $pb={2}>
          {apps.map((a, i) => (
            <AppIcon key={i} $bg={a.bg}>{a.icon}{a.extra}{a.dot && <Dot $w={dots[a.dot][0]} $c={dots[a.dot][1]} />}</AppIcon>
          ))}
        </Zone>
        <Zone $pb={1}>
          <Slot $w={30} $ml={335}><S w={12} h={8}><path d="M1 7l5-5 5 5" /></S></Slot>
          <Slot $w={34}><S w={16} h={12} strokeWidth={1.2}><path d="M.6.6h14.800v10.800H.6zM4 8.500h8" /><path d="M3 3.500h10M3 6h10" strokeDasharray="1.500 1" /></S></Slot>
          <Stack $align="center" $w={42}><span>ENG</span><span>US</span></Stack>
          <Slot $w={34}><S w={16} h={14} strokeWidth={1.3}><path d="M.5 5.500q7.500-7.500 15 0M3 8q5-5 10 0M5.500 10.500q2.500-2.500 5 0" /><circle cx="8" cy="12" r="1.200" fill="currentColor" stroke="none" /></S></Slot>
          <Slot $w={16}><Speaker /></Slot>
          <Slot $w={32}><S w={17} h={14}><path d="M5 4h9v8.500H2.500V7" /><path fill="currentColor" stroke="none" d="M4 7h9.500v4.500H4zM15 6.500h2v3.500h-2zM3 0L0 5h2.500L1.500 9 6 3.500H3.500L5 0z" /></S></Slot>
          <Stack $align="right" $w={64} $ls={-.2}><span>4:03 PM</span><span>30/1/2024</span></Stack>
          <Slot $w={30}><S w={15} h={16} stroke="none"><path fill="#fff" d="M1 12l1.500-2V6a5 5 0 0 1 5-4.500q4 0 5 4.500v4L14 12zM5 13.500h5q-2.500 3-5 0z" /><path d="M5.500 5h3.500l-3.500 4h3.500M11 1h3l-3 3.500h3" stroke="#20242a" strokeWidth="1.200" /></S></Slot>
        </Zone>
      </Taskbar>
    </Screen>
  );
}
